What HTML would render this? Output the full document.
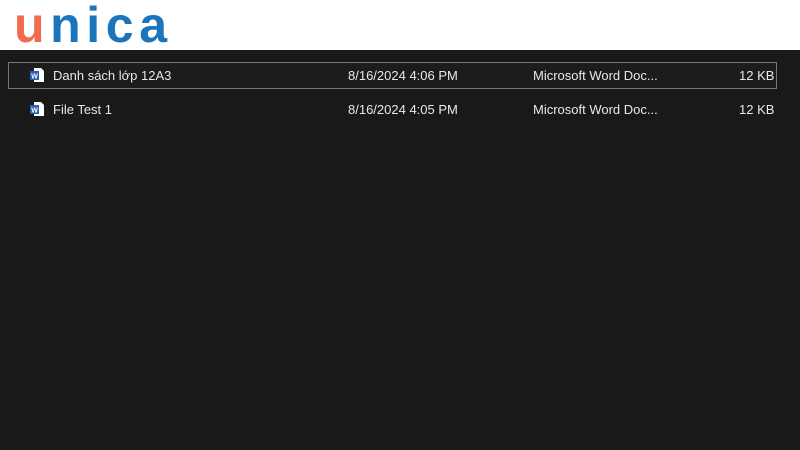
<!DOCTYPE html>
<html><head><style>
body{margin:0;width:800px;height:450px;background:#191919;overflow:hidden;font-family:"Liberation Sans",sans-serif;position:relative}
.hdr{position:absolute;left:0;top:0;width:800px;height:50px;background:#fff}
.row{position:absolute;left:8px;width:769px;height:27px;color:#e8e8e8;font-size:13px}
.row span{position:absolute;top:6px}
.sel{border:1px solid #777;box-sizing:border-box;background:#1c1c1c}
.sel span{top:5px;margin-left:-1px}
.ic{position:absolute;left:22px;top:5px;width:14px;height:16px}
</style></head><body>
<div class="hdr">
<svg width="200" height="50" style="position:absolute;left:0;top:0">
<text x="14" y="42" font-family="Liberation Sans" font-weight="bold" font-size="50" textLength="153" lengthAdjust="spacing"><tspan fill="#f26b4f">u</tspan><tspan fill="#1a75bb">nica</tspan></text>
</svg>
</div>
<div class="row sel" style="top:62px">
<svg class="ic" viewBox="0 0 14 16" style="left:21px;top:4px"><path d="M4 1h7l3 3v11H4z" fill="#fff"/><rect x="0" y="4" width="9" height="9" fill="#2b5fb4"/><text x="1.3" y="11.5" font-size="7" fill="#fff" font-weight="bold">W</text></svg>
<span style="left:45px">Danh sách lớp 12A3</span><span style="left:340px">8/16/2024 4:06 PM</span><span style="left:525px">Microsoft Word Doc...</span><span style="left:731px">12 KB</span></div>
<div class="row" style="top:96px">
<svg class="ic" viewBox="0 0 14 16"><path d="M4 1h7l3 3v11H4z" fill="#fff"/><rect x="0" y="4" width="9" height="9" fill="#2b5fb4"/><text x="1.3" y="11.5" font-size="7" fill="#fff" font-weight="bold">W</text></svg>
<span style="left:45px">File Test 1</span><span style="left:340px">8/16/2024 4:05 PM</span><span style="left:525px">Microsoft Word Doc...</span><span style="left:731px">12 KB</span></div>
</body></html>
